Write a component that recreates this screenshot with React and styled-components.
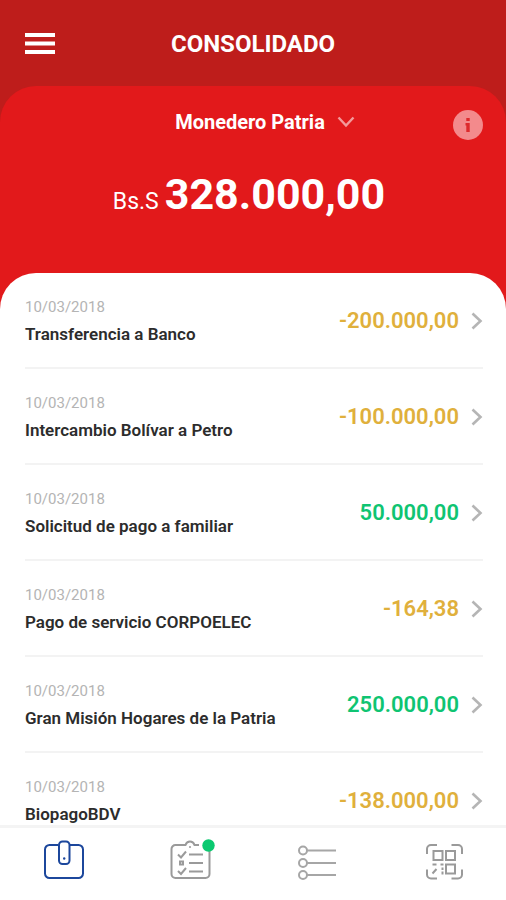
import React from 'react';
import styled, { createGlobalStyle } from 'styled-components';

const GlobalStyle = createGlobalStyle`
  * {
    box-sizing: border-box;
  }
  body {
    margin: 0;
    font-family: Roboto, 'Liberation Sans', sans-serif;
    background-color: #fff;
  }
  button {
    font-family: inherit;
    padding: 0;
    border: 0;
    background: none;
    cursor: pointer;
  }
  svg {
    display: block;
    overflow: visible;
  }
`;

const Screen = styled.div`
  display: flex;
  flex-flow: column nowrap;
  height: 100vh;
  background-color: #be1d1b;
`;

const Header = styled.header`
  display: grid;
  grid-template-columns: 32px 1fr 32px;
  align-items: center;
  flex: none;
  padding: 28px 24px 26px;
  h1 {
    margin: 0;
    font-size: 24px;
    line-height: 32px;
    font-weight: bold;
    color: #fff;
    text-align: center;
  }
`;

const Panel = styled.main`
  display: flex;
  flex-flow: column nowrap;
  flex: 1;
  min-height: 0;
  border-radius: 36px 36px 0 0;
  background-color: #e2191b;
`;

const WalletBar = styled.div`
  display: grid;
  grid-template-columns: 32px 1fr 32px;
  align-items: start;
  padding: 22px 22px 0;
`;

const WalletPicker = styled.label`
  display: flex;
  align-items: center;
  justify-content: center;
  gap: 12px;
  padding-left: 24px;
  select {
    appearance: none;
    field-sizing: content;
    margin: 0;
    padding: 0;
    border: 0;
    background: none;
    font-family: inherit;
    font-size: 20px;
    line-height: 28px;
    font-weight: bold;
    color: #fff;
  }
  option {
    color: #333;
  }
`;

const InfoButton = styled.button`
  padding-top: 2px;
  justify-self: center;
`;

const Balance = styled.p`
  margin: 0;
  padding: 22px 8px 39px 0;
  text-align: center;
  font-size: 43px;
  line-height: 64px;
  font-weight: bold;
  color: #fff;
  small {
    font-size: 23px;
    font-weight: 400;
    margin-right: 6px;
  }
`;

const Movements = styled.ul`
  flex: 1;
  min-height: 0;
  margin: 0;
  padding: 0 23px 0 25px;
  list-style: none;
  overflow-y: auto;
  scrollbar-width: none;
  border-radius: 36px 36px 0 0;
  background-color: #fff;
`;

const Movement = styled.li`
  border-bottom: 2px solid #f3f3f3;
  button {
    display: flex;
    align-items: center;
    width: 100%;
    padding: 21px 0 19px;
    text-align: left;
  }
`;

const Detail = styled.span`
  display: flex;
  flex-flow: column nowrap;
  flex: 1;
`;

const DateText = styled.span`
  font-size: 15px;
  line-height: 26px;
  color: #b4b4b4;
`;

const Concept = styled.span`
  font-size: 17px;
  line-height: 28px;
  font-weight: 600;
  color: #2c2c2c;
`;

const Amount = styled.span`
  margin-right: 12px;
  font-size: 22px;
  line-height: 28px;
  font-weight: 600;
  color: ${({ $negative }) => $negative ? '#e0b03c' : '#0fc472'};
`;

const Tabs = styled.nav`
  display: flex;
  flex: none;
  justify-content: space-between;
  padding: 12px 40px 16px 42px;
  border-top: 3px solid #f4f4f4;
  background-color: #fff;
`;

const movements = [
  { concept: 'Transferencia a Banco', amount: '-200.000,00' },
  { concept: 'Intercambio Bolívar a Petro', amount: '-100.000,00' },
  { concept: 'Solicitud de pago a familiar', amount: '50.000,00' },
  { concept: 'Pago de servicio CORPOELEC', amount: '-164,38' },
  { concept: 'Gran Misión Hogares de la Patria', amount: '250.000,00' },
  { concept: 'BiopagoBDV', amount: '-138.000,00' },
];

const MenuIcon = () => (
  <svg width="32" height="24" viewBox="0 0 32 24" fill="#fff">
    <path d="M1 1h30v4H1zM1 9.500h30v4H1zM1 18h30v4H1z" />
  </svg>
);

const ChevronDown = () => (
  <svg width="18" height="12" viewBox="0 0 18 12" fill="none" stroke="#f39a9b" strokeWidth="2.400">
    <path d="M1.500 1.500L9 9.500l7.500-8" />
  </svg>
);

const ChevronRight = () => (
  <svg width="12" height="18" viewBox="0 0 12 18" fill="none" stroke="#b5b5b5" strokeWidth="2.600">
    <path d="M1.500 1.500L9.500 9l-8 7.500" />
  </svg>
);

const InfoIcon = () => (
  <svg width="30" height="30" viewBox="0 0 30 30">
    <circle cx="15" cy="15" r="15" fill="#f38a8c" />
    <path d="M13.300 8h3.400v3h-3.400zM12.500 13h4.200v9h-3.400v-6.500h-.8z" fill="#dd2a2c" />
  </svg>
);

const WalletIcon = () => (
  <svg width="44" height="44" viewBox="0 1 44 44" fill="none" stroke="#1c479c" strokeWidth="2">
    <path d="M16.500 6H7.500a4.500 4.500 0 0 0-4.500 4.500v24A4.500 4.500 0 0 0 7.500 39h29a4.500 4.500 0 0 0 4.500-4.500v-24A4.500 4.500 0 0 0 36.500 6h-9" />
    <rect x="17" y="2.500" width="10.500" height="22.500" rx="3.500" />
    <circle cx="22.200" cy="19.500" r="1.200" fill="#1c479c" stroke="none" />
  </svg>
);

const TasksIcon = () => (
  <svg width="44" height="44" viewBox="0 1 44 44" fill="none" stroke="#9a9a9a" strokeWidth="2">
    <path d="M30 6h-4.500c-.8-2.300-2.500-3.500-4.500-3.500S17.300 3.700 16.500 6H6.500A4 4 0 0 0 2.500 10v25a4 4 0 0 0 4 4h30a4 4 0 0 0 4-4V11" />
    <path d="M20 15.500h14M20 24h14M20 32.500h14" />
    <path d="M9 15.500l3 3 5-6M9 32l3 3 5-6" />
    <path d="M11 22.500h3v3h-3z" />
    <circle cx="21" cy="8" r="1" fill="#9a9a9a" stroke="none" />
    <circle cx="39.500" cy="6.500" r="6.200" fill="#0bc970" stroke="none" />
  </svg>
);

const ListIcon = () => (
  <svg width="44" height="44" viewBox="0 0 44 44" fill="none" stroke="#a6a6a6" strokeWidth="2">
    <circle cx="8" cy="10.500" r="4" />
    <circle cx="8" cy="23" r="4" />
    <circle cx="8" cy="35" r="4" />
    <path d="M12 10.500h29M12 23h29M12 35h29" />
  </svg>
);

const QrIcon = () => (
  <svg width="44" height="44" viewBox="0 0 44 44" fill="none" stroke="#9a9a9a" strokeWidth="2">
    <path d="M5 14V9a4 4 0 0 1 4-4h6M29.500 5H36a4 4 0 0 1 4 4v5M40 29.500v5a4 4 0 0 1-4 4h-6.500M15 38.500H9a4 4 0 0 1-4-4v-5" />
    <path d="M11.500 11h9v9h-9zM24 11h9v9h-9zM24 24.500h9v9h-9z" />
    <path d="M10.500 24.500h4M18.500 24.500h3M14.500 29l-4 4.500M20.500 27.500v2.500M20.500 31.500v3" />
  </svg>
);

const App = () => {
  return (
    <>
      <GlobalStyle />
      <Screen>
        <Header>
          <button type="button" aria-label="Menú"><MenuIcon /></button>
          <h1>CONSOLIDADO</h1>
        </Header>
        <Panel>
          <WalletBar>
            <span />
            <WalletPicker>
              <select aria-label="Monedero">
                <option>Monedero Patria</option>
              </select>
              <ChevronDown />
            </WalletPicker>
            <InfoButton type="button" aria-label="Información"><InfoIcon /></InfoButton>
          </WalletBar>
          <Balance><small>Bs.S</small>328.000,00</Balance>
          <Movements>
            {movements.map(({ concept, amount }) => (
              <Movement key={concept}>
                <button type="button">
                  <Detail>
                    <DateText>10/03/2018</DateText>
                    <Concept>{concept}</Concept>
                  </Detail>
                  <Amount $negative={amount.startsWith('-')}>{amount}</Amount>
                  <ChevronRight />
                </button>
              </Movement>
            ))}
          </Movements>
        </Panel>
        <Tabs>
          <button type="button" aria-label="Monedero"><WalletIcon /></button>
          <button type="button" aria-label="Solicitudes"><TasksIcon /></button>
          <button type="button" aria-label="Movimientos"><ListIcon /></button>
          <button type="button" aria-label="Código QR"><QrIcon /></button>
        </Tabs>
      </Screen>
    </>
  )
}

export default App
